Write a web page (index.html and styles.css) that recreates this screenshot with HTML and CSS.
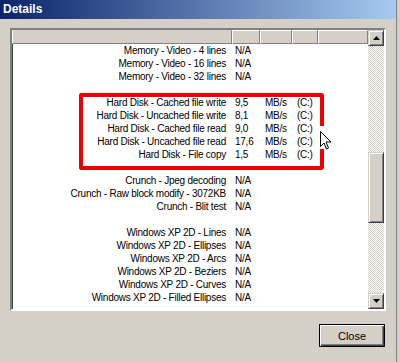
FILE: index.html
```html
<!DOCTYPE html>
<html lang="en">
<head>
    <meta charset="UTF-8">
    <title>Details</title>
    <link rel="stylesheet" href="styles.css">
</head>
<body>

<div class="window">
    <div class="titlebar">Details</div>

    <div class="client">
        <div class="listbox">
            <div class="listview">
                <table class="grid">
                    <thead>
                        <tr>
                            <th class="c1"></th>
                            <th class="c2"></th>
                            <th class="c3"></th>
                            <th class="c4"></th>
                            <th class="c5"></th>
                        </tr>
                    </thead>
                    <tbody>
                        <tr><td>Memory - Video - 4 lines</td><td>N/A</td><td></td><td></td><td></td></tr>
                        <tr><td>Memory - Video - 16 lines</td><td>N/A</td><td></td><td></td><td></td></tr>
                        <tr><td>Memory - Video - 32 lines</td><td>N/A</td><td></td><td></td><td></td></tr>
                        <tr><td></td><td></td><td></td><td></td><td></td></tr>
                        <tr><td>Hard Disk - Cached file write</td><td>9,5</td><td>MB/s</td><td>(C:)</td><td></td></tr>
                        <tr><td>Hard Disk - Uncached file write</td><td>8,1</td><td>MB/s</td><td>(C:)</td><td></td></tr>
                        <tr><td>Hard Disk - Cached file read</td><td>9,0</td><td>MB/s</td><td>(C:)</td><td></td></tr>
                        <tr><td>Hard Disk - Uncached file read</td><td>17,6</td><td>MB/s</td><td>(C:)</td><td></td></tr>
                        <tr><td>Hard Disk - File copy</td><td>1,5</td><td>MB/s</td><td>(C:)</td><td></td></tr>
                        <tr><td></td><td></td><td></td><td></td><td></td></tr>
                        <tr><td>Crunch - Jpeg decoding</td><td>N/A</td><td></td><td></td><td></td></tr>
                        <tr><td>Crunch - Raw block modify - 3072KB</td><td>N/A</td><td></td><td></td><td></td></tr>
                        <tr><td>Crunch - Blit test</td><td>N/A</td><td></td><td></td><td></td></tr>
                        <tr><td></td><td></td><td></td><td></td><td></td></tr>
                        <tr><td>Windows XP 2D - Lines</td><td>N/A</td><td></td><td></td><td></td></tr>
                        <tr><td>Windows XP 2D - Ellipses</td><td>N/A</td><td></td><td></td><td></td></tr>
                        <tr><td>Windows XP 2D - Arcs</td><td>N/A</td><td></td><td></td><td></td></tr>
                        <tr><td>Windows XP 2D - Beziers</td><td>N/A</td><td></td><td></td><td></td></tr>
                        <tr><td>Windows XP 2D - Curves</td><td>N/A</td><td></td><td></td><td></td></tr>
                        <tr><td>Windows XP 2D - Filled Ellipses</td><td>N/A</td><td></td><td></td><td></td></tr>
                    </tbody>
                </table>

                <!-- red highlight drawn over the disk results -->
                <div class="highlight"></div>
                <svg class="cursor" width="12" height="19" viewBox="0 0 12 19">
                    <path d="M0.5 0.5 L0.5 15.5 L4 12 L6.5 18 L8.5 17 L6 11 L11 11 Z" fill="#fff" stroke="#000" stroke-width="1"/>
                </svg>
            </div>

            <div class="scrollbar">
                <div class="sb-btn">
                    <svg width="7" height="4" viewBox="0 0 7 4"><path d="M3.5 0 L7 4 L0 4 Z" fill="#000"/></svg>
                </div>
                <div class="sb-track">
                    <div class="sb-thumb"></div>
                </div>
                <div class="sb-btn">
                    <svg width="7" height="4" viewBox="0 0 7 4"><path d="M0 0 L7 0 L3.5 4 Z" fill="#000"/></svg>
                </div>
            </div>
        </div>

        <div class="buttons">
            <button class="btn">Close</button>
        </div>
    </div>
</div>

</body>
</html>
```

FILE: styles.css
```css
body {
    margin: 0;
    background-color: #d4d0c8;
    font-family: "Liberation Sans", Arial, sans-serif;
    font-size: 10px;
    letter-spacing: -0.25px;
    color: #000;
}
.window {
    width: 396px;
    height: 362px;
    background-color: #d4d0c8;
    border-right: 1px solid #808080;
}
.titlebar {
    height: 19px;
    line-height: 19px;
    padding-left: 3px;
    color: #fff;
    font-weight: bold;
    font-size: 12px;
    letter-spacing: 0;
    background: linear-gradient(to right, #0a246a, #a6caf0);
}
.client {
    padding: 9px 10px 0 10px;
}
/* sunken list box */
.listbox {
    display: flex;
    width: 372px;
    height: 279px;
    border: 2px solid;
    border-color: #808080 #fff #fff #808080;
    box-shadow: inset 1px 1px 0 #404040;
    background-color: #fff;
}
.listview {
    position: relative;
    width: 356px;
    overflow: hidden;
}
.grid {
    table-layout: fixed;
    border-collapse: separate;
    border-spacing: 0;
    width: 356px;
}
.grid th {
    height: 12px;
    padding: 0;
    background-color: #d4d0c8;
    border-top: 1px solid #fff;
    border-left: 1px solid #fff;
    border-right: 1px solid #808080;
    border-bottom: 1px solid #808080;
}
.grid th.c1 { width: 218px; border-top-color: #d4d0c8; }
.grid th.c2 { width: 26px; }
.grid th.c3 { width: 30px; }
.grid th.c4 { width: 24px; }
.grid th.c5 { width: 48px; }
.grid td {
    height: 13px;
    padding: 0 0 0 3px;
    line-height: 13px;
    white-space: nowrap;
    overflow: hidden;
}
.grid td:first-child {
    text-align: right;
    padding: 0 6px 0 0;
}
.grid td:nth-child(3), .grid td:nth-child(4) {
    padding-left: 5px;
}
.highlight {
    position: absolute;
    left: 67px;
    top: 63px;
    width: 237px;
    height: 69px;
    border: 4px solid #ee0000;
    border-right: none;
    border-radius: 3px 0 0 3px;
}
.highlight::after {
    content: "";
    position: absolute;
    right: -4px;
    top: -4px;
    width: 4px;
    height: 77px;
    border-radius: 0 3px 3px 0;
    background: linear-gradient(#ee0000 0, #ee0000 33px, transparent 33px, transparent 56px, #ee0000 56px);
}
.cursor {
    position: absolute;
    left: 308px;
    top: 101px;
}
/* scroll bar */
.scrollbar {
    display: flex;
    flex-direction: column;
    width: 16px;
}
.sb-btn {
    height: 14px;
    display: flex;
    align-items: center;
    justify-content: center;
    background-color: #d4d0c8;
    border: 1px solid;
    border-color: #d4d0c8 #404040 #404040 #d4d0c8;
    box-shadow: inset 1px 1px 0 #fff, inset -1px -1px 0 #808080;
}
.sb-track {
    flex: 1;
    background-color: #e8e6e1;
    background-image: repeating-conic-gradient(#fff 0 25%, #d4d0c8 0 50%);
    background-size: 2px 2px;
}
.sb-thumb {
    margin-top: 106px;
    height: 69px;
    background-color: #d4d0c8;
    border: 1px solid;
    border-color: #d4d0c8 #404040 #404040 #d4d0c8;
    box-shadow: inset 1px 1px 0 #fff, inset -1px -1px 0 #808080;
}
.buttons {
    display: flex;
    justify-content: flex-end;
    margin-top: 13px;
    padding-right: 1px;
}
.btn {
    width: 66px;
    height: 23px;
    padding: 0;
    font-family: "Liberation Sans", Arial, sans-serif;
    font-size: 11px;
    color: #000;
    background-color: #d4d0c8;
    border: 1px solid #000;
    box-shadow: inset 1px 1px 0 #fff, inset -1px -1px 0 #404040, inset -2px -2px 0 #808080;
}
```
